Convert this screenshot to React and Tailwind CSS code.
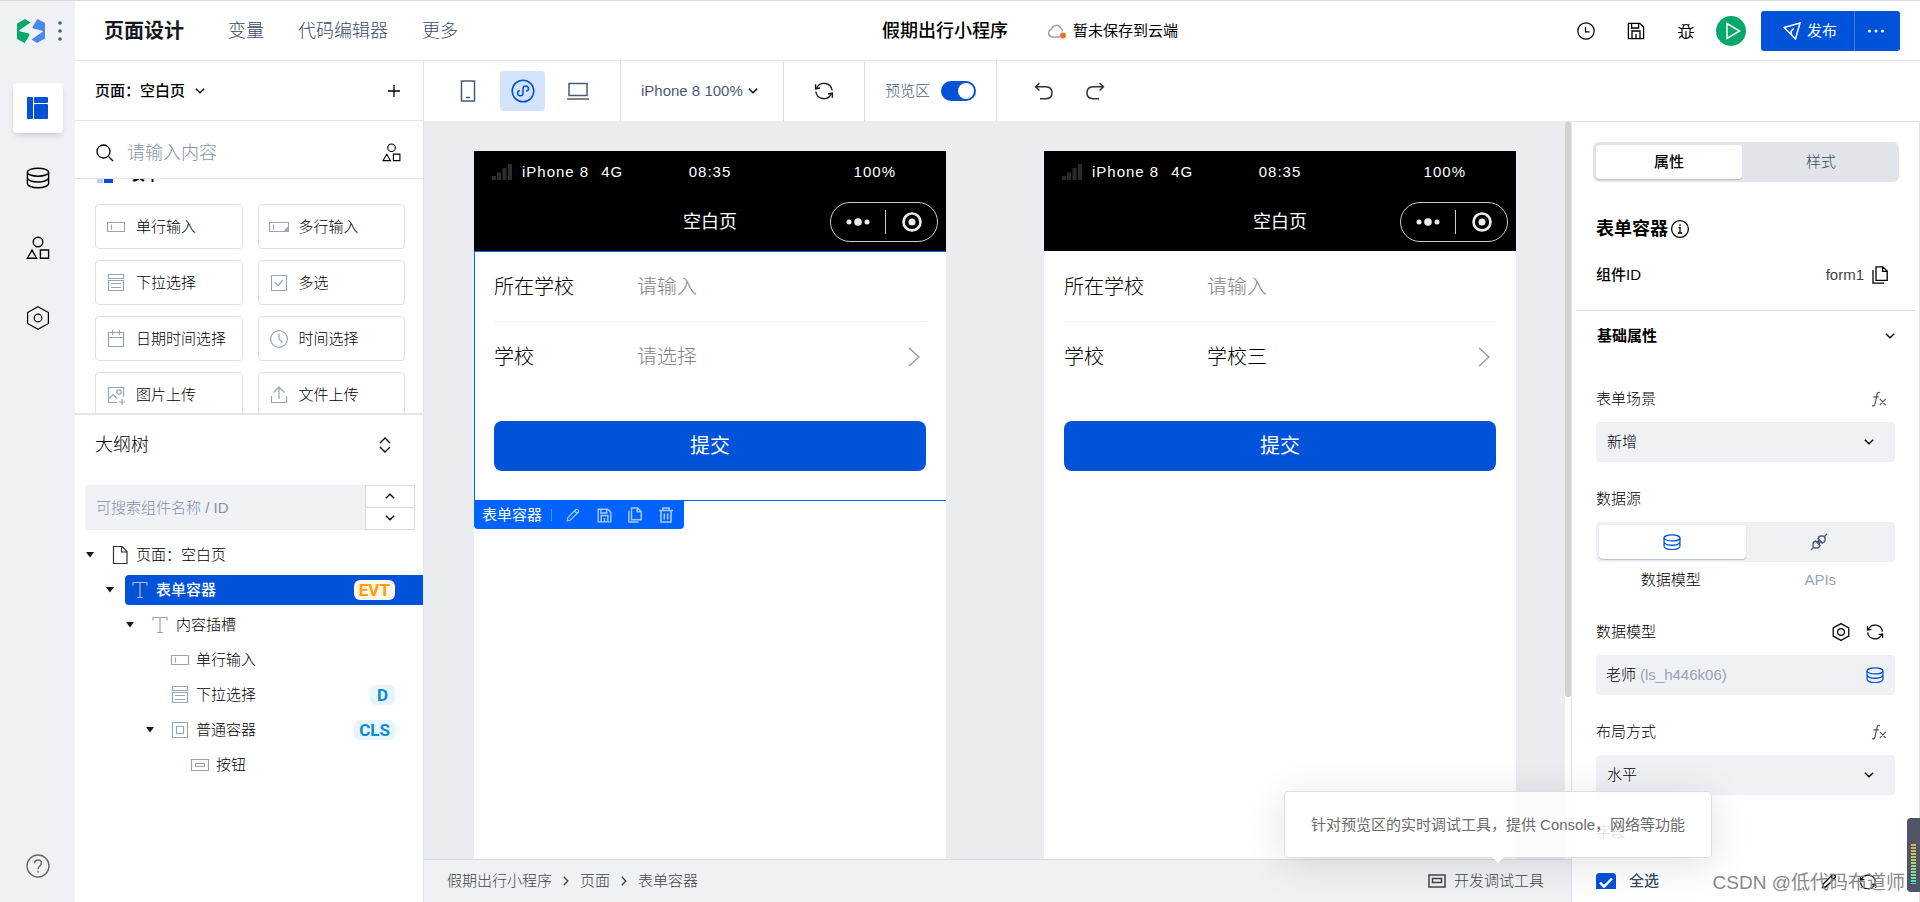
import { useState } from "react";

const components = [
  { name: "单行输入", icon: "input" },
  { name: "多行输入", icon: "textarea" },
  { name: "下拉选择", icon: "dropdown" },
  { name: "多选", icon: "check" },
  { name: "日期时间选择", icon: "calendar" },
  { name: "时间选择", icon: "time" },
  { name: "图片上传", icon: "image" },
  { name: "文件上传", icon: "upload" },
];

const tree = [
  { name: "页面：空白页", icon: "page", indent: "pl-0", open: true },
  { name: "表单容器", icon: "slot", indent: "pl-5", open: true, badge: "EVT", active: true },
  { name: "内容插槽", icon: "slot", indent: "pl-10", open: true },
  { name: "单行输入", icon: "input", indent: "pl-[60px]" },
  { name: "下拉选择", icon: "dropdown", indent: "pl-[60px]", badge: "D" },
  { name: "普通容器", icon: "box", indent: "pl-[60px]", open: true, badge: "CLS" },
  { name: "按钮", icon: "button", indent: "pl-20" },
];

export default function App() {
  return (
    <div className="relative flex h-screen overflow-hidden border-t border-[#d9d9d9] bg-white font-['Liberation_Sans','Noto_Sans_CJK_SC',sans-serif] text-[15px] leading-6 font-light text-black">
      <Rail />
      <div className="flex min-w-0 flex-1 flex-col">
        <Header />
        <div className="flex min-h-0 flex-1">
          <LeftPanel />
          <div className="flex min-w-0 flex-1 flex-col">
            <Toolbar />
            <div className="flex min-h-0 flex-1">
              <main className="flex min-w-0 flex-1 flex-col">
                <Canvas />
                <Footer />
              </main>
              <Properties />
            </div>
          </div>
        </div>
      </div>
      <Watermark />
    </div>
  );
}

/* ---------- icons ---------- */

const Svg = ({ w = 20, h = w, box = `0 0 ${w} ${h}`, className = "", sw = 1.2, children }) => (
  <svg
    width={w}
    height={h}
    viewBox={box}
    fill="none"
    stroke="currentColor"
    strokeWidth={sw}
    className={`shrink-0 ${className}`}
    aria-hidden="true"
  >
    {children}
  </svg>
);

const Chevron = ({ className }) => (
  <Svg w={10} h={6} sw={1.4} className={className}>
    <path d="M.8.8 5 4.8 9.2.8" />
  </Svg>
);

const Database = ({ w = 24, sw = 1.4, className }) => (
  <Svg w={w} h={(w * 22) / 24} box="0 0 24 22" sw={sw} className={className}>
    <ellipse cx="12" cy="5.2" rx="10.6" ry="4" />
    <path d="M1.4 5.2v11.2c0 2.4 4.6 4.4 10.6 4.4s10.6-2 10.6-4.4V5.2M1.4 10.8c0 2.3 4.6 4.2 10.6 4.2s10.6-1.9 10.6-4.2" />
  </Svg>
);

const Shapes = ({ w = 24, sw = 1.4 }) => (
  <Svg w={w} box="0 0 24 24" sw={sw}>
    <circle cx="12" cy="6" r="4.8" />
    <path d="M6 14.2 10.6 22.2H1.4ZM14.4 14h8.2v8.2h-8.2z" />
  </Svg>
);

const Hexagon = ({ w = 24, sw = 1.2, r = 3.8 }) => (
  <Svg w={w} box="0 0 24 24" sw={sw}>
    <path d="M12 .8 22.4 6.6v10.8L12 23.2 1.6 17.4V6.6Z" />
    <circle cx="12" cy="12" r={r} />
  </Svg>
);

const Refresh = ({ w = 20, className }) => (
  <Svg w={w} box="0 0 20 20" sw={1.4} className={className}>
    <path d="M2.6 7.2A8.2 8.2 0 0 1 18.2 9.5M17.4 12.8A8.2 8.2 0 0 1 1.8 10.5" />
    <path d="M1.6 3.2v4.6l4.4-.8M18.4 16.8v-4.6l-4.4.8" />
  </Svg>
);

const Save = ({ w = 18, sw = 1.3 }) => (
  <Svg w={w} box="0 0 18 18" sw={sw}>
    <path d="M1.4 1.4h11.4l3.8 3.6v11.6H1.4zM5 16.6V9h8v7.6M4.6 1.4V6h7V1.4M9 12v4" />
  </Svg>
);

const Copy = ({ w = 16, sw = 1.3 }) => (
  <Svg w={w} h={w + 2} box="0 0 16 18" sw={sw}>
    <path d="M4 .9h6.8L15.2 5v9.4H4zM10.6 1v4.4h4.4M1 4v13.1h11" />
  </Svg>
);

const Pencil = ({ w = 16, sw = 1.4 }) => (
  <Svg w={w} box="0 0 16 16" sw={sw}>
    <path d="m1.4 14.6.8-3.6L11.4 1.8q.9-.7 1.8.1l1 1q.7.9 0 1.7L5 13.8ZM9.8 3.4l2.8 2.8" />
  </Svg>
);

const Fx = () => (
  <Svg w={16} h={16} className="text-[#555]">
    <path d="M9 1.7Q6.7.5 6 3.4L4 12.8Q3.3 15.6 1 14.6M2.4 5.8h5.4M8.8 7.8l6 6.4M14.8 7.8l-6 6.4" />
  </Svg>
);

const glyphs = {
  input: (
    <Svg>
      <path d="M1.5 5.5h17v9h-17zM5.5 7.5v5" />
    </Svg>
  ),
  textarea: (
    <Svg>
      <path d="M.5 5.5h19v9H.5zM4.5 7.5v5" />
      <path d="M19 10.5v4h-4z" fill="currentColor" />
    </Svg>
  ),
  dropdown: (
    <Svg>
      <path d="M2.5 1.5h15v4h-15zM2.5 7.5h15v10h-15zM5 10.5h10M5 14.5h10" />
    </Svg>
  ),
  check: (
    <Svg>
      <path d="M2.5 2.5h15v15h-15zM6 9.5l3 3.2L14 7" />
    </Svg>
  ),
  calendar: (
    <Svg>
      <path d="M2.5 3.5h15v14h-15zM2.5 8.5h15M6.5 1v5M13.5 1v5" />
    </Svg>
  ),
  time: (
    <Svg>
      <circle cx="10" cy="10" r="8.4" />
      <path d="M10 4.5V10l3.5 3.5" />
    </Svg>
  ),
  image: (
    <Svg>
      <path d="M17.5 11.5v-9h-15v15h9M3 13.5l4-4 4 4M16 14v6M13 17h6" />
      <circle cx="13" cy="7" r="2.2" />
    </Svg>
  ),
  upload: (
    <Svg>
      <path d="M10 14V2M4.5 7.5 10 2l5.5 5.5M2.5 11v6.5h15V11" />
    </Svg>
  ),
  page: (
    <Svg className="text-[#333]">
      <path d="M3.5 1.5h8.5l5 5v12H3.5zM11.5 2v5H17" />
    </Svg>
  ),
  slot: (
    <Svg>
      <path d="M3 5.5v-3h14v3M10 2.5v15M7 17.5h6" />
    </Svg>
  ),
  box: (
    <Svg>
      <path d="M2.5 2.5h15v15h-15zM6.5 6.5h7v7h-7z" />
    </Svg>
  ),
  button: (
    <Svg>
      <path d="M1.5 4.5h17v11h-17zM5.5 8.5h9v3h-9z" />
    </Svg>
  ),
};

/* ---------- left side ---------- */

const RailButton = ({ label, active, children }) => (
  <button
    aria-label={label}
    className={`flex size-[50px] items-center justify-center rounded ${
      active ? "bg-white text-[#0052d9] shadow-md shadow-black/10" : ""
    }`}
  >
    {children}
  </button>
);

const Rail = () => (
  <aside className="flex w-[75px] shrink-0 flex-col items-center bg-[#eff1f5]">
    <div className="flex h-[60px] w-full items-center gap-3 pl-[17px]">
      <svg width="28" height="24" viewBox="0 0 28 24" aria-hidden="true">
        <path d="M0 4.5 8 0l5.5 3.5L2 11.5Q3.5 13 9 13.8 14 14.5 12 17L7.5 24 0 20Z" fill="#07a86c" />
        <path
          d="M0 4.5 8 0l5.5 3.5L2 11.5Q3.5 13 9 13.8 14 14.5 12 17L7.5 24 0 20Z"
          fill="#4a87f0"
          transform="rotate(180 14 12)"
        />
      </svg>
      <button aria-label="应用菜单" className="text-[#4b5b76]">
        <svg width="6" height="22" fill="currentColor" aria-hidden="true">
          <circle cx="3" cy="3" r="1.8" />
          <circle cx="3" cy="11" r="1.8" />
          <circle cx="3" cy="19" r="1.8" />
        </svg>
      </button>
    </div>
    <nav className="mt-[22px] flex flex-1 flex-col gap-5">
      <RailButton label="页面设计" active>
        <svg width="22" height="22" fill="currentColor" aria-hidden="true">
          <rect width="6" height="22" rx="1" />
          <rect x="7" width="14" height="6" rx="1" />
          <rect x="7" y="7" width="14" height="15" rx="1" />
        </svg>
      </RailButton>
      <RailButton label="数据源">
        <Database />
      </RailButton>
      <RailButton label="组件">
        <Shapes />
      </RailButton>
      <RailButton label="设置">
        <Hexagon />
      </RailButton>
    </nav>
    <button aria-label="帮助" className="mb-6 text-[#666]">
      <Svg w={24} sw={1.4}>
        <circle cx="12" cy="12" r="11" />
        <path d="M8.5 9.3Q8.7 6 12 6t3.5 3q0 1.7-1.7 3-1.8 1.4-1.8 3M12 16.8v1.6" />
      </Svg>
    </button>
  </aside>
);

const LeftPanel = () => (
  <section className="flex w-[349px] shrink-0 flex-col border-r border-[#e2e4ea]">
    <div className="flex h-[60px] items-center border-b border-[#e2e4ea] pr-[23px] pl-5">
      <button className="flex items-center gap-[10px] font-medium">
        页面：空白页
        <Chevron />
      </button>
      <button aria-label="新建页面" className="ml-auto">
        <Svg w={12} sw={1.3}>
          <path d="M6 0v12M0 6h12" />
        </Svg>
      </button>
    </div>
    <div className="flex h-[58px] items-center border-b border-[#e2e4ea] pt-[6px] pr-[22px] pl-[21px]">
      <Svg w={18} sw={1.3}>
        <circle cx="7.5" cy="7.5" r="6.5" />
        <path d="m12.5 12.5 4.5 4.5" />
      </Svg>
      <input
        aria-label="搜索组件"
        placeholder="请输入内容"
        className="ml-[13px] min-w-0 flex-1 text-lg outline-none placeholder:text-[#8592a8]"
      />
      <button aria-label="组件分类">
        <Shapes w={19} />
      </button>
    </div>
    <div className="h-[234px] overflow-hidden pr-[18px] pl-5">
      {/* group title is scrolled under the search bar */}
      <div className="-mt-[14px] flex h-5 items-center gap-[17px] leading-5 font-bold">
        <span className="ml-[2px] flex h-4 gap-px">
          <span className="w-[6px] bg-[#b3cdf8]" />
          <span className="w-[9px] bg-[#0052d9]" />
        </span>
        表单
      </div>
      <div className="mt-[19px] grid grid-cols-2 gap-x-[15px] gap-y-[11px]">
        {components.map((c) => (
          <button
            key={c.name}
            className="flex h-[45px] items-center gap-[10px] rounded border border-[#dfe1e7] pl-[10px]"
          >
            <span className="text-[#97a3b7]">{glyphs[c.icon]}</span>
            {c.name}
          </button>
        ))}
      </div>
    </div>
    <OutlineTree />
  </section>
);

const OutlineTree = () => (
  <div className="flex min-h-0 flex-1 flex-col border-t-2 border-[#e6e6e8]">
    <div className="flex h-[60px] items-center justify-between pr-[32px] pl-5">
      <h2 className="text-lg">大纲树</h2>
      <button aria-label="展开收起">
        <Svg w={12} h={16} sw={1.3}>
          <path d="M1 6 6 1l5 5M1 10l5 5 5-5" />
        </Svg>
      </button>
    </div>
    <div className="mt-[10px] mr-2 mb-[7px] ml-[10px] flex h-[45px]">
      <input
        aria-label="搜索大纲树"
        placeholder="可搜索组件名称 / ID"
        className="min-w-0 flex-1 rounded-l bg-[#eff1f5] pl-[11px] outline-none placeholder:text-[#8592a8]"
      />
      <div className="grid w-[50px] grid-rows-2 divide-y divide-[#d9dbe1] border border-[#d9dbe1]">
        <button aria-label="上一个" className="flex items-center justify-center">
          <Chevron className="rotate-180" />
        </button>
        <button aria-label="下一个" className="flex items-center justify-center">
          <Chevron />
        </button>
      </div>
    </div>
    <ul className="pl-[10px]">
      {tree.map((node, i) => (
        <li key={i} className={`flex h-[35px] items-center ${node.indent}`}>
          <span className="w-5 shrink-0">
            {node.open && (
              <svg width="10" height="6" fill="#16181d" aria-hidden="true">
                <path d="M1 0h8L5 5.5Z" />
              </svg>
            )}
          </span>
          <button
            className={`flex h-[30px] flex-1 items-center gap-[6px] pr-7 pl-[5px] ${
              node.active ? "rounded-l-sm bg-[#0052d9] font-medium text-white" : ""
            }`}
          >
            <span className={node.active ? "text-[#b3b9c6]" : "text-[#97a3b7]"}>{glyphs[node.icon]}</span>
            {node.name}
            {node.badge && <Badge text={node.badge} />}
          </button>
        </li>
      ))}
    </ul>
  </div>
);

const Badge = ({ text }) => (
  <span
    className={`ml-auto min-w-[25px] rounded-md px-[5px] text-center font-['Roboto',sans-serif] text-[17px] leading-5 font-bold ${
      text === "EVT" ? "bg-[#fff6e8] text-[#ff9d00]" : "bg-[#e6f4fd] text-[#0a8bd6]"
    }`}
  >
    {text}
  </span>
);

/* ---------- top ---------- */

const Header = () => (
  <header className="flex h-[60px] shrink-0 items-center border-b border-[#e2e4ea] pr-5 pl-[29px]">
    <nav className="flex flex-1 items-center text-lg text-[#3b4a66]">
      <a href="#design" className="mr-[44px] text-xl font-bold text-[#16181d]">
        页面设计
      </a>
      <a href="#vars" className="mr-[34px]">
        变量
      </a>
      <a href="#code" className="mr-[34px]">
        代码编辑器
      </a>
      <a href="#more">更多</a>
    </nav>
    <div className="ml-14 flex items-center">
      <h1 className="mr-[39px] text-lg font-medium">假期出行小程序</h1>
      <Svg w={20} h={16} sw={1.5} className="mr-[6px] text-[#97a3b7]">
        <path d="M13 14H5a4 4 0 0 1-.5-7.8A5 5 0 0 1 14 5.5q1.5.5 1.5 3" />
        <circle cx="16" cy="12.5" r="3" fill="#ed6f33" stroke="none" />
      </Svg>
      <span className="font-normal">暂未保存到云端</span>
    </div>
    <div className="flex flex-1 items-center justify-end">
      <button aria-label="历史">
        <Svg w={18} sw={1.2}>
          <circle cx="9" cy="9" r="8.2" />
          <path d="M8.5 5v4.8h4" />
        </Svg>
      </button>
      <button aria-label="保存" className="ml-8">
        <Save />
      </button>
      <button aria-label="调试" className="ml-8">
        <Svg w={18} sw={1.1}>
          <path d="M5 6.5h8v6.3q-.5 3.4-4 3.7-3.5-.3-4-3.7zM6 6.3Q6.2 2.5 9 2.5t3 3.8M9 9v7M5.5 2 6.8 3.5M12.5 2l-1.3 1.5M1.5 5.2 5 7M16.5 5.2 13 7M1 10.5h4M17 10.5h-4M2 16l3-2.5M16 16l-3-2.5" />
        </Svg>
      </button>
      <button
        aria-label="运行"
        className="ml-[21px] flex size-[30px] items-center justify-center rounded-full bg-[#07a86c] text-white"
      >
        <Svg w={16} h={18} sw={1.5} className="ml-1">
          <path d="M2 1.5 14.5 9 2 16.5Z" />
        </Svg>
      </button>
      <div className="ml-[15px] flex h-10 divide-x divide-[#3c7be4] rounded-[3px] bg-[#0052d9] font-normal text-white">
        <button className="flex items-center gap-[6px] pr-[17px] pl-[22px]">
          <Svg w={18} sw={1.5}>
            <path d="M1 5.5 17 1l-4.5 16-4.3-4.5L1 5.5ZM8.2 12.5V9l2.5-2.5" />
          </Svg>
          发布
        </button>
        <button aria-label="更多操作" className="flex w-[45px] items-center justify-center pr-1">
          <svg width="18" height="4" fill="currentColor" aria-hidden="true">
            <circle cx="2.5" cy="2" r="1.5" />
            <circle cx="9" cy="2" r="1.5" />
            <circle cx="15.5" cy="2" r="1.5" />
          </svg>
        </button>
      </div>
    </div>
  </header>
);

const Toolbar = () => {
  const [preview, setPreview] = useState(true);

  return (
    <div className="flex h-[60px] shrink-0 divide-x divide-[#dcdfe6] text-[#4b5b76]">
      <div className="flex w-[197px] items-center gap-[10px] pl-[21px]">
        <button aria-label="手机" className="flex w-[45px] justify-center">
          <Svg w={16} h={22} sw={1.5}>
            <path d="M1.5 1h13v20h-13zM6 17.5h4" />
          </Svg>
        </button>
        <button
          aria-label="小程序"
          className="flex h-10 w-[45px] items-center justify-center rounded bg-[#d4e3fc] text-[#0052d9]"
        >
          <Svg w={24} sw={1.5}>
            <circle cx="12" cy="12" r="10.8" />
            <path d="M8.8 11.5a2.7 2.7 0 1 0 3.2 2.7V9.5a2.7 2.7 0 1 1 3.2 2.8" />
          </Svg>
        </button>
        <button aria-label="桌面" className="flex w-[45px] justify-center">
          <Svg w={22} h={18} sw={1.5}>
            <path d="M2 1.5h18v12H2zM0 17h22" />
          </Svg>
        </button>
      </div>
      <button className="flex w-[163px] items-center gap-[5px] pl-5">
        iPhone 8 100%
        <Chevron className="text-black" />
      </button>
      <button aria-label="刷新" className="flex w-[81px] items-center justify-center text-[#16181d]">
        <Refresh />
      </button>
      <label className="flex w-[132px] items-center gap-[11px] pl-5">
        预览区
        <input
          type="checkbox"
          checked={preview}
          onChange={(e) => setPreview(e.target.checked)}
          className="h-5 w-[35px] appearance-none rounded-full bg-[#c5cad5] p-[2px] before:block before:size-4 before:rounded-full before:bg-white checked:bg-[#0052d9] checked:before:ml-[15px]"
        />
      </label>
      <div className="flex items-center gap-[31px] pl-[37px] text-[#333]">
        <button aria-label="撤销">
          <Svg w={20} h={18} sw={1.5}>
            <path d="M5.5 1 1.5 4.7 5.5 8.5M1.5 4.7H12q6 .3 6 6t-6 6H6" />
          </Svg>
        </button>
        <button aria-label="重做">
          <Svg w={20} h={18} sw={1.5}>
            <path d="m14.5 1 4 3.7-4 3.8M18.5 4.7H8q-6 .3-6 6t6 6h6" />
          </Svg>
        </button>
      </div>
    </div>
  );
};

/* ---------- canvas ---------- */

const Canvas = () => (
  <div className="flex min-h-0 flex-1 overflow-hidden bg-[#ebecf0]">
    <div className="flex min-w-0 flex-1 gap-[98px] pt-[30px] pl-[50px]">
      <Phone id="edit" selected />
      <Phone id="preview" value="学校三" />
    </div>
    <div className="w-[6px] shrink-0 bg-white">
      <div className="h-[78%] rounded-full bg-[#d3d3d3]" />
    </div>
  </div>
);

const Phone = ({ id, selected, value }) => (
  <section className="flex w-[472px] shrink-0 flex-col bg-white">
    <div className="h-[100px] shrink-0 bg-black font-normal text-white">
      <div className="grid h-[42px] grid-cols-3 items-center tracking-[1px]">
        <div className="flex items-center gap-[10px] pl-[18px]">
          <svg width="20" height="16" fill="#2b2b2b" aria-hidden="true">
            <path d="M0 12h4v4H0zM5 8.5h4V16H5zM10.5 4h4v12h-4zM16 0h4v16h-4z" />
          </svg>
          <span>iPhone 8</span>
          <span className="pl-[2px]">4G</span>
        </div>
        <div className="text-center">08:35</div>
        <div className="pr-[50px] text-right">100%</div>
      </div>
      <div className="grid h-[58px] grid-cols-3 items-center">
        <h2 className="col-start-2 text-center text-lg">空白页</h2>
        <div className="mr-2 flex h-10 w-[108px] items-center justify-self-end rounded-full border border-[#ccc]">
          <button aria-label="菜单" className="flex h-6 w-[55px] items-center justify-center border-r border-[#ccc]">
            <svg width="24" height="10" fill="#eee" aria-hidden="true">
              <circle cx="3" cy="5" r="2.5" />
              <circle cx="12" cy="5" r="3.8" />
              <circle cx="21" cy="5" r="2.5" />
            </svg>
          </button>
          <button aria-label="关闭" className="flex flex-1 items-center justify-center pl-[2px] text-[#eee]">
            <Svg w={20} sw={2.6}>
              <circle cx="10" cy="10" r="8.5" />
              <circle cx="10" cy="10" r="3.5" fill="currentColor" stroke="none" />
            </Svg>
          </button>
        </div>
      </div>
    </div>
    <form
      className={`flex h-[250px] shrink-0 flex-col px-5 text-xl ${
        selected ? "border-y border-l border-[#0063ff] pl-[19px]" : "border-y border-white"
      }`}
    >
      <div className="flex h-[70px] items-center border-b border-[#f0f0f0]">
        <label htmlFor={`${id}-name`} className="w-[143px]">
          所在学校
        </label>
        <input
          id={`${id}-name`}
          placeholder="请输入"
          className="min-w-0 flex-1 outline-none placeholder:text-[#858585]"
        />
      </div>
      <div className="flex h-[70px] items-center">
        <label htmlFor={`${id}-school`} className="w-[143px]">
          学校
        </label>
        <select
          id={`${id}-school`}
          className={`min-w-0 flex-1 appearance-none outline-none ${value ? "" : "text-[#858585]"}`}
        >
          <option>{value || "请选择"}</option>
        </select>
        <Svg w={12} h={20} sw={1.5} className="mr-[6px] text-[#9b9b9b]">
          <path d="m1 1 10 9L1 19" />
        </Svg>
      </div>
      <button type="button" className="mt-[29px] h-[50px] rounded-lg bg-[#0052d9] font-normal text-white">
        提交
      </button>
    </form>
    {selected && (
      <div className="flex h-7 w-[210px] items-center rounded-b bg-[#0063ff] pl-2 font-normal text-white">
        <span className="pr-[9px]">表单容器</span>
        <span className="h-3 w-px bg-[#4d91ff]" />
        <div className="flex flex-1 items-center justify-between pr-[11px] pl-[14px] text-[#a6c8ff]">
          <button aria-label="编辑">
            <Pencil w={14} />
          </button>
          <button aria-label="存为模板">
            <Save w={15} sw={1.7} />
          </button>
          <button aria-label="复制">
            <Copy w={14} sw={1.7} />
          </button>
          <button aria-label="删除">
            <Svg w={14} h={16} sw={1.6}>
              <path d="M0 3.5h14M4 3V1h6v2M2 4v11h10V4M5.3 6.5v6M8.7 6.5v6" />
            </Svg>
          </button>
        </div>
      </div>
    )}
  </section>
);

const Footer = () => (
  <footer className="flex h-[43px] shrink-0 items-center border-t border-[#d5dae0] bg-[#f0f1f5] pr-[27px] pl-[23px] text-[#444]">
    <nav className="flex items-center gap-[9px]">
      <a href="#app">假期出行小程序</a>
      <Chevron className="-rotate-90" />
      <a href="#page">页面</a>
      <Chevron className="-rotate-90" />
      <a href="#form">表单容器</a>
    </nav>
    <button className="relative ml-auto flex items-center gap-2">
      <Svg w={18} h={14} sw={1.5}>
        <path d="M1 1h16v12H1zM4.5 4.5h9v4h-9z" />
      </Svg>
      开发调试工具
      <span
        role="tooltip"
        className="absolute bottom-[35px] left-[-144px] z-10 flex h-[67px] w-[428px] items-center justify-center rounded border border-[#dcdee5] bg-white/85 font-normal whitespace-nowrap text-[#6b6b6b] shadow-[0_6px_40px_rgba(0,0,0,0.12)]"
      >
        针对预览区的实时调试工具，提供 Console，网络等功能
        <span className="absolute top-full left-1/2 -translate-x-1/2 border-x-6 border-t-6 border-transparent border-t-white" />
      </span>
    </button>
  </footer>
);

/* ---------- properties ---------- */

const FieldLabel = ({ htmlFor, text, children }) => (
  <div className="mt-[25px] mb-[11px] flex h-6 items-center justify-between">
    {htmlFor ? <label htmlFor={htmlFor}>{text}</label> : <span>{text}</span>}
    {children}
  </div>
);

const SelectField = ({ id, value }) => (
  <div className="relative flex items-center">
    <select id={id} className="h-10 w-full appearance-none rounded bg-[#eff1f5] pl-[11px] outline-none">
      <option>{value}</option>
    </select>
    <Chevron className="pointer-events-none absolute right-[21px]" />
  </div>
);

const Properties = () => (
  <aside className="w-[349px] shrink-0 overflow-hidden border border-b-0 border-[#e2e4ea]">
    <div className="mt-5 mr-5 ml-[21px] flex h-10 rounded-md bg-[#e1e4e9] p-[3px]">
      <button className="w-[146px] rounded bg-white font-medium shadow-[0_1px_1px_#b4bccb]">属性</button>
      <button className="flex-1 pl-1 text-[#3b4a66]">样式</button>
    </div>
    <div className="mt-[33px] flex h-7 items-center gap-[2px] pl-6 text-lg font-bold">
      表单容器
      <Svg w={20} sw={1.3}>
        <circle cx="10" cy="10" r="8.4" />
        <path d="M8.5 8.5H10V14M8 14h4M10 5.2v1.6" />
      </Svg>
    </div>
    <div className="mt-5 flex h-6 items-center gap-2 pr-[31px] pl-6">
      <span className="flex-1 font-medium">组件ID</span>
      <span className="text-[#444]">form1</span>
      <button aria-label="复制ID">
        <Copy />
      </button>
    </div>
    <hr className="mx-1 mt-[23px] border-[#e2e4ea]" />
    <button className="mt-[13px] flex h-6 w-full items-center justify-between pr-6 pl-[25px] font-bold">
      基础属性
      <Chevron />
    </button>
    <div className="mt-[39px] pr-6 pl-6">
      <FieldLabel htmlFor="scene" text="表单场景">
        <button aria-label="表达式" className="mr-2">
          <Fx />
        </button>
      </FieldLabel>
      <SelectField id="scene" value="新增" />

      <FieldLabel text="数据源" />
      <div className="flex h-10 rounded bg-[#eff1f5] p-[3px]">
        <button
          aria-label="数据模型"
          className="flex flex-1 items-center justify-center rounded bg-white text-[#0052d9] shadow-[0_1px_1px_#b4bccb]"
        >
          <Database w={18} sw={1.7} />
        </button>
        <button aria-label="APIs" className="flex flex-1 items-center justify-center text-[#4b5b76]">
          <Svg w={18} sw={1.3}>
            <path d="m1 17 2.5-2.5M14.5 3.500 17 1" />
            <rect x="3" y="8.500" width="6.500" height="6.500" rx="2.500" />
            <rect x="8.500" y="3" width="6.500" height="6.500" rx="2.500" />
            <path d="m5 7.500 5.500 5.500M7.500 5l5.500 5.500" />
          </Svg>
        </button>
      </div>
      <div className="mt-[6px] mb-7 flex h-6 text-center">
        <span className="flex-1">数据模型</span>
        <span className="flex-1 text-[#97a3b7]">APIs</span>
      </div>

      <FieldLabel text="数据模型">
        <span className="mr-[11px] flex gap-4">
          <button aria-label="模型设置">
            <Hexagon w={18} sw={1.7} r={4.5} />
          </button>
          <button aria-label="刷新模型">
            <Refresh w={18} />
          </button>
        </span>
      </FieldLabel>
      <button className="flex h-10 w-full items-center gap-1 rounded bg-[#eff1f5] pr-[11px] pl-[10px]">
        老师 <span className="text-[#97a3b7]">(ls_h446k06)</span>
        <Database w={18} sw={1.7} className="ml-auto text-[#0052d9]" />
      </button>

      <FieldLabel htmlFor="layout" text="布局方式">
        <button aria-label="表达式" className="mr-2">
          <Fx />
        </button>
      </FieldLabel>
      <SelectField id="layout" value="水平" />

      <FieldLabel text="字段" />
      <div className="mt-[29px] flex h-4 items-start overflow-hidden leading-4">
        <label className="relative flex gap-[13px] font-medium text-[#3b4a66]">
          <input
            type="checkbox"
            defaultChecked
            className="size-5 appearance-none rounded-[3px] border border-[#b4bccb] checked:border-[#0052d9] checked:bg-[#0052d9]"
          />
          <Svg w={20} sw={2.4} className="pointer-events-none absolute text-white">
            <path d="m4 9.5 4 4.2L16 5.5" />
          </Svg>
          全选
        </label>
        <button aria-label="编辑字段" className="mr-[22px] ml-auto">
          <Pencil />
        </button>
        <button aria-label="刷新字段" className="mr-[18px]">
          <Refresh w={18} />
        </button>
      </div>
    </div>
  </aside>
);

const Watermark = () => (
  <>
    <span className="pointer-events-none absolute right-[15px] bottom-[5px] text-[19px] leading-7 font-normal text-[#888]">
      CSDN @低代码布道师
    </span>
    <span className="absolute right-0 bottom-[10px] flex h-[74px] w-[13px] flex-col justify-end rounded-l bg-[#4f5566] px-1 py-2">
      <span className="h-[40px] bg-[repeating-linear-gradient(to_bottom,transparent_0_2px,#4f5566_2px_3px),linear-gradient(#e0b040,#a8d860,#4fe0c0)]" />
    </span>
  </>
);
